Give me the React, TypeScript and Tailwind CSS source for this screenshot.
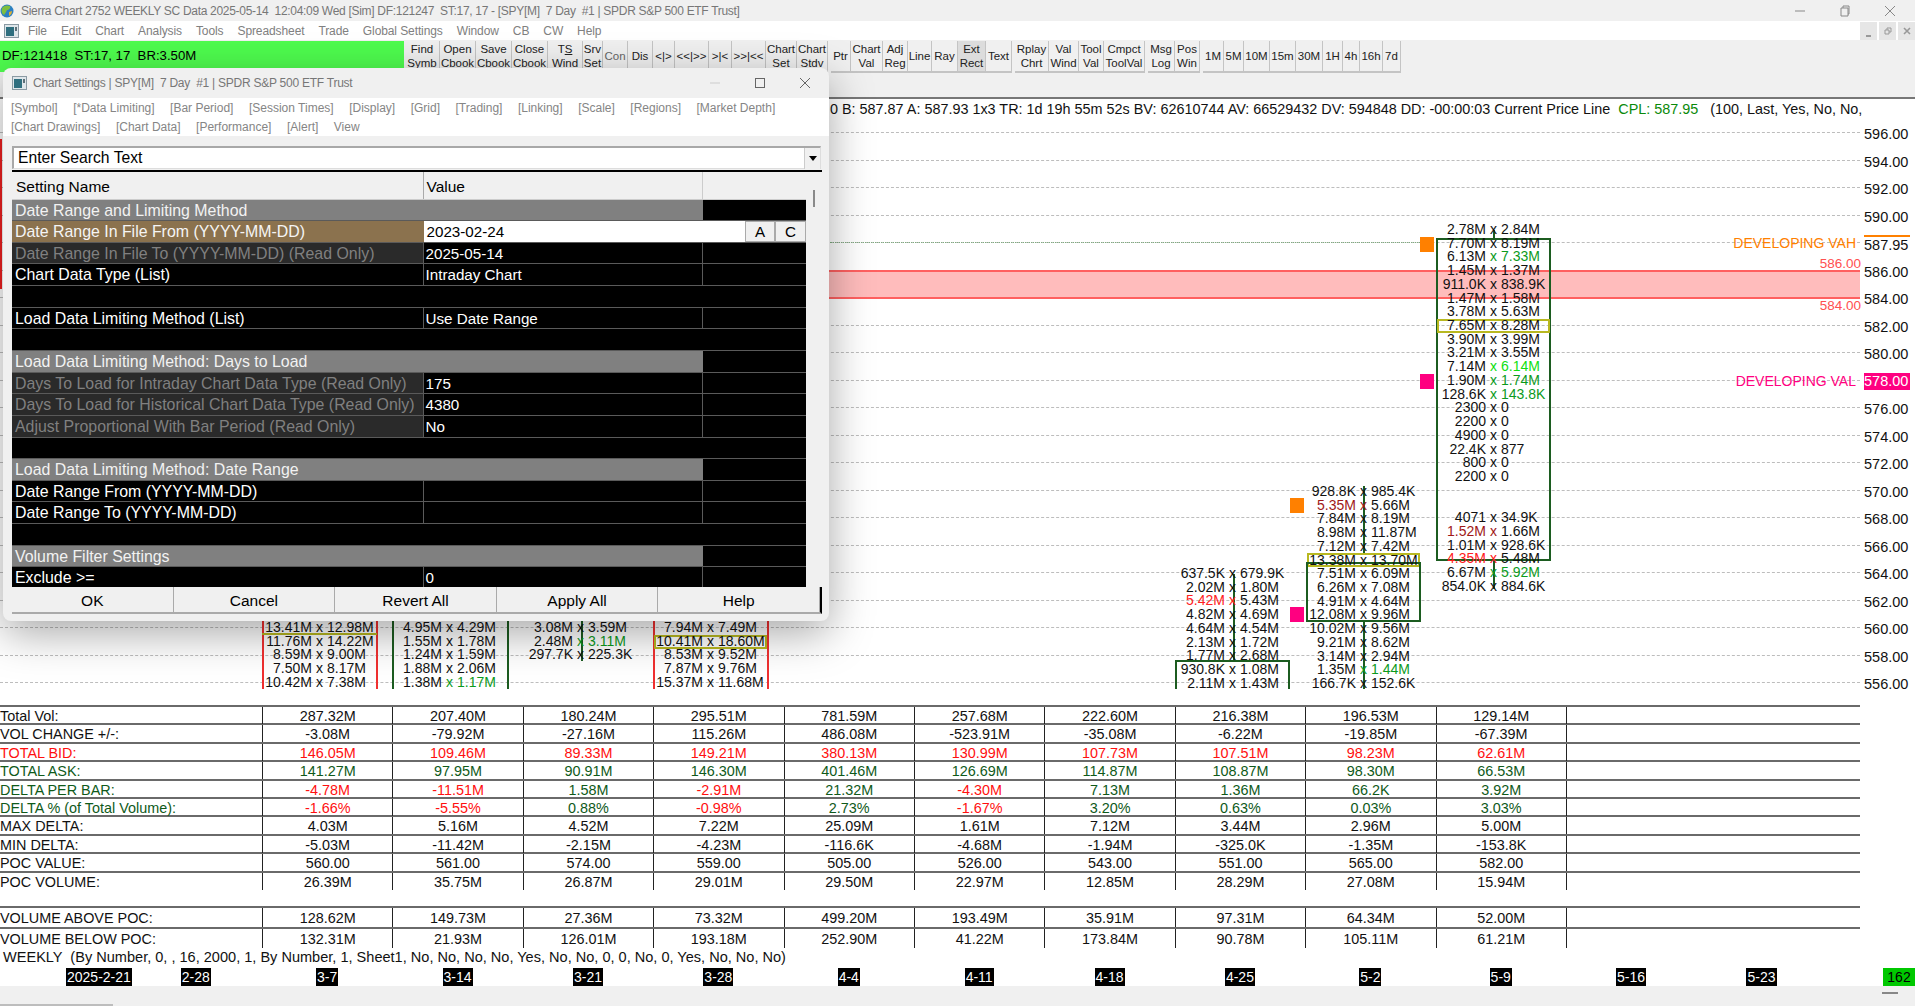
import React from "react";

const FONT = "font-['Liberation_Sans',Arial,sans-serif]";
const yOf = (p: number) => 133 + (596 - p) * 13.75 - 98;

type Tb = { t: string; w: string; c?: string };
const groups: Tb[][] = [
  [
    { t: "Find\nSymb", w: "w-[35px]" },
    { t: "Open\nCbook", w: "w-[36px]" },
    { t: "Save\nCbook", w: "w-[36px]" },
    { t: "Close\nCbook", w: "w-[36px]" },
    { t: "TS\nWind", w: "w-[35px]" },
    { t: "Srv\nSet", w: "w-[20px]" },
    { t: "Con", w: "w-[25px]", c: "text-[#666]" },
    { t: "Dis", w: "w-[25px]" },
    { t: "<|>", w: "w-[22px]" },
    { t: "<<|>>", w: "w-[34px]" },
    { t: ">|<", w: "w-[23px]" },
    { t: ">>|<<", w: "w-[34px]" },
    { t: "Chart\nSet", w: "w-[31px]" },
    { t: "Chart\nStdv", w: "w-[31px]" },
  ],
  [
    { t: "Ptr", w: "w-[20px]" },
    { t: "Chart\nVal", w: "w-[32px]" },
    { t: "Adj\nReg", w: "w-[25px]" },
    { t: "Line", w: "w-[24px]" },
    { t: "Ray", w: "w-[26px]" },
    { t: "Ext\nRect", w: "w-[28px]", c: "bg-[#dcdcdc]" },
    { t: "Text", w: "w-[26px]" },
  ],
  [
    { t: "Rplay\nChrt", w: "w-[34px]" },
    { t: "Val\nWind", w: "w-[30px]" },
    { t: "Tool\nVal", w: "w-[25px]" },
    { t: "Cmpct\nToolVal", w: "w-[41px]" },
  ],
  [
    { t: "Msg\nLog", w: "w-[27px]" },
    { t: "Pos\nWin", w: "w-[25px]" },
  ],
  [
    { t: "1M", w: "w-[21px]" },
    { t: "5M", w: "w-[20px]" },
    { t: "10M", w: "w-[26px]" },
    { t: "15m", w: "w-[26px]" },
    { t: "30M", w: "w-[27px]" },
    { t: "1H", w: "w-[20px]" },
    { t: "4h", w: "w-[17px]" },
    { t: "16h", w: "w-[23px]" },
    { t: "7d", w: "w-[18px]" },
  ],
];

const menu = ["File", "Edit", "Chart", "Analysis", "Tools", "Spreadsheet", "Trade", "Global Settings", "Window", "CB", "CW", "Help"];

function AppIcon({ className }: { className: string }) {
  return (
    <svg viewBox="0 0 15 14" className={className}>
      <rect x="0.5" y="0.5" width="14" height="13" fill="#dfe6ea" stroke="#8a9aa3" />
      <rect x="2" y="3" width="8" height="9" fill="#2f6f7f" />
      <rect x="11" y="3" width="2" height="4" fill="#5b6f78" />
    </svg>
  );
}

function Chrome() {
  return (
    <>
      <div className="h-[21px] bg-[#f0f0f0] flex items-center relative text-[12px] tracking-[-0.3px] text-[#777]">
        <svg viewBox="0 0 14 14" className="w-[14px] h-[14px] ml-[0px]">
          <circle cx="7" cy="7" r="6.5" fill="#2b7fc4" />
          <path d="M2 4c2-3 6-3 8-2 1 2-1 4-3 4-1 2-2 4-3 5-2-1-3-4-2-7z" fill="#7fbf3f" />
          <path d="M9 8l3-1c0 2-1 4-3 5z" fill="#e0b030" />
        </svg>
        <span className="ml-[7px] whitespace-pre">Sierra Chart 2752 WEEKLY SC Data 2025-05-14  12:04:09 Wed [Sim] DF:121247  ST:17, 17 - [SPY[M]  7 Day  #1 | SPDR S&amp;P 500 ETF Trust]</span>
        <div className="ml-auto flex items-center gap-[29px] pr-[17px]">
          <svg viewBox="0 0 16 16" className="w-[16px] h-[16px]"><path d="M3 8h10" stroke="#888" fill="none" /></svg>
          <svg viewBox="0 0 16 16" className="w-[16px] h-[16px]"><path d="M4 5h7v8H4zM6 5V3h6v8h-1" stroke="#888" fill="none" /></svg>
          <svg viewBox="0 0 16 16" className="w-[16px] h-[16px]"><path d="M3 3l10 10M13 3L3 13" stroke="#888" fill="none" /></svg>
        </div>
      </div>
      <div className="h-[19px] bg-white flex items-center relative text-[12px] tracking-[-0.1px] text-[#808080]">
        <AppIcon className="w-[15px] h-[14px] ml-[4px] mr-[9px]" />
        <div className="flex gap-[14px]">
          {menu.map((m) => (
            <span key={m}>{m}</span>
          ))}
        </div>
        <div className="ml-auto flex gap-[2px] h-[18px] text-[#9a9a9a] text-[10px]">
          <span className="w-[17px] bg-[#e6e6e6] flex items-end justify-center pb-[3px]"><span className="w-[5px] h-[2px] bg-[#999]" /></span>
          <span className="w-[17px] bg-[#e6e6e6] flex items-center justify-center">
            <svg viewBox="0 0 8 8" className="w-[8px] h-[8px]"><path d="M1 3h4v4H1zM3 3V1h4v4H5" stroke="#999" fill="none" /></svg>
          </span>
          <span className="w-[17px] bg-[#e6e6e6] flex items-center justify-center">
            <svg viewBox="0 0 8 8" className="w-[8px] h-[8px]"><path d="M1 1l6 6M7 1L1 7" stroke="#999" strokeWidth="1.6" fill="none" /></svg>
          </span>
        </div>
      </div>
      <div className="h-[57px] bg-[#f0f0f0] flex items-start pt-[1px]">
        <div className="w-[404px] h-[31px] bg-[#4efc4e] text-[13.2px] text-black flex items-start pt-[5px] pl-[2px] whitespace-pre shrink-0">DF:121418  ST:17, 17  BR:3.50M</div>
        <div className="flex gap-[3px] ml-[1px]">
          {groups.map((g, i) => (
            <div key={i} className="flex">
              {g.map((b) => (
                <div
                  key={b.t}
                  className={`${b.w} ${b.c ?? ""} h-[32px] border-r border-b-2 border-[#c4c4c4] flex items-center justify-center text-center text-[11.5px] leading-[14px] text-[#222] whitespace-pre`}
                >
                  {b.t === "TS\nWind" ? (
                    <span>
                      T<u>S</u>
                      {"\nWind"}
                    </span>
                  ) : (
                    b.t
                  )}
                </div>
              ))}
            </div>
          ))}
        </div>
      </div>
    </>
  );
}

type Cell = [string, string, string?, string?];
const RED = "text-[#ff2020]";
const DRED = "text-[#a01818]";
const GRN = "text-[#0c9a1c]";
const LIME = "text-[#10e010]";

function Rows({ left, top, rows }: { left: number; top: number; rows: (Cell | null)[] }) {
  return (
    <div className="absolute w-[115px] text-[14px] leading-[13.72px] text-[#111]" style={{ left, top }}>
      {rows.map((r, i) =>
        r ? (
          <div key={i} className="grid grid-cols-[1fr_auto_1fr] gap-x-[4px] h-[13.72px] whitespace-nowrap">
            <span className={`text-right ${r[2] ?? ""}`}>{r[0]}</span>
            <span className={r[3] ?? r[2] ?? ""}>x</span>
            <span className={`text-left ${r[3] ?? ""}`}>{r[1]}</span>
          </div>
        ) : (
          <div key={i} className="h-[13.72px]" />
        )
      )}
    </div>
  );
}

function Box({ l, t, w, h, c }: { l: number; t: number; w: number; h: number; c: string }) {
  return <div className={`absolute border-2 ${c}`} style={{ left: l, top: t - 98, width: w, height: h }} />;
}
function VLine({ x, t, b, c }: { x: number; t: number; b: number; c: string }) {
  return <div className={`absolute w-[2px] ${c}`} style={{ left: x, top: t - 98, height: b - t }} />;
}
function Sq({ x, y, c }: { x: number; y: number; c: string }) {
  return <div className={`absolute w-[14px] h-[15px] ${c}`} style={{ left: x, top: y - 98 }} />;
}

const GREEN_B = "bg-[#1c5c20]";
const prices = [596, 594, 592, 590, 586, 584, 582, 580, 576, 574, 572, 570, 568, 566, 564, 562, 560, 558, 556];

function Chart() {
  return (
    <div className="relative h-[608px] bg-white border-t-2 border-[#777] overflow-hidden text-[14px] text-[#111]">
      {[...prices, 578, 588].map((p) => (
        <div key={p} className="absolute left-0 w-[1860px] border-t border-dashed border-[#bdbdbd]" style={{ top: yOf(p) - 2 }} />
      ))}
      <div className="absolute left-[830px] w-[590px] border-t border-dotted border-[#7fae7f]" style={{ top: 143 }} />
      <div className="absolute left-0 top-[40px] w-[2px] h-[150px] bg-[#f02020]" />

      {/* band */}
      <div className="absolute left-[700px] w-[1160px] bg-[#ffbcbc] border-y-2 border-[#ff6060]" style={{ top: yOf(586) - 2, height: 29 }} />

      {/* header text */}
      <div className="absolute left-[830px] top-[2px] whitespace-pre leading-[16px] text-[14.4px]">
        0 B: 587.87 A: 587.93 1x3 TR: 1d 19h 55m 52s BV: 62610744 AV: 66529432 DV: 594848 DD: -00:00:03 Current Price Line  <span className="text-[#0a8a0a]">CPL: 587.95</span>   (100, Last, Yes, No, No,
      </div>

      {/* bars under dialog */}
      <VLine x={262} t={610} b={688} c="bg-[#f03030]" />
      <VLine x={376} t={610} b={688} c="bg-[#f03030]" />
      <div className="absolute left-[262px] w-[115px] h-[2px] bg-[#b8b820]" style={{ top: 632 - 98 }} />
      <Rows left={262} top={620 - 98} rows={[["13.41M", "12.98M"], ["11.76M", "14.22M"], ["8.59M", "9.00M"], ["7.50M", "8.17M"], ["10.42M", "7.38M"]]} />

      <VLine x={392} t={610} b={688} c={GREEN_B} />
      <VLine x={507} t={610} b={688} c={GREEN_B} />
      <Rows left={392} top={620 - 98} rows={[["4.95M", "4.29M"], ["1.55M", "1.78M"], ["1.24M", "1.59M"], ["1.88M", "2.06M"], ["1.38M", "1.17M", "", GRN]]} />

      <VLine x={581} t={610} b={660} c={GREEN_B} />
      <Rows left={523} top={620 - 98} rows={[["3.08M", "3.59M"], ["2.48M", "3.11M", "", GRN], ["297.7K", "225.3K"]]} />

      <VLine x={653} t={610} b={688} c="bg-[#f03030]" />
      <VLine x={767} t={610} b={688} c="bg-[#f03030]" />
      <Box l={654} t={634} w={113} h={14} c="border-[#b8b820]" />
      <Rows left={653} top={620 - 98} rows={[["7.94M", "7.49M"], ["10.41M", "18.60M"], ["8.53M", "9.52M"], ["7.87M", "9.76M"], ["15.37M", "11.68M"]]} />

      {/* bar 1175 */}
      <VLine x={1233} t={573} b={660} c={GREEN_B} />
      <div className={`absolute left-[1175px] w-[115px] border-2 border-b-0 border-[#1c5c20]`} style={{ top: 659 - 98, height: 29 }} />
      <Rows
        left={1175}
        top={566 - 98}
        rows={[["637.5K", "679.9K"], ["2.02M", "1.80M"], ["5.42M", "5.43M", RED], ["4.82M", "4.69M"], ["4.64M", "4.54M"], ["2.13M", "1.72M"], ["1.77M", "2.68M"], ["930.8K", "1.08M"], ["2.11M", "1.43M"]]}
      />

      {/* bar 1306 */}
      <VLine x={1363} t={485} b={552} c={GREEN_B} />
      <VLine x={1363} t={620} b={688} c={GREEN_B} />
      <Box l={1307} t={552} w={113} h={14} c="border-[#b8b820]" />
      <Box l={1306} t={561} w={115} h={60} c="border-[#1c5c20]" />
      <Rows
        left={1306}
        top={484 - 98}
        rows={[
          ["928.8K", "985.4K"],
          ["5.35M", "5.66M", DRED],
          ["7.84M", "8.19M"],
          ["8.98M", "11.87M"],
          ["7.12M", "7.42M"],
          ["13.38M", "13.70M"],
          ["7.51M", "6.09M"],
          ["6.26M", "7.08M"],
          ["4.91M", "4.64M"],
          ["12.08M", "9.96M"],
          ["10.02M", "9.56M"],
          ["9.21M", "8.62M"],
          ["3.14M", "2.94M"],
          ["1.35M", "1.44M", "", GRN],
          ["166.7K", "152.6K"],
        ]}
      />
      <Sq x={1290} y={497} c="bg-[#ff8000]" />
      <Sq x={1290} y={606} c="bg-[#ff0080]" />

      {/* bar 1436 */}
      <VLine x={1493} t={229} b={238} c={GREEN_B} />
      <VLine x={1493} t={559} b={588} c={GREEN_B} />
      <Box l={1436} t={237} w={115} h={323} c="border-[#1c5c20]" />
      <Box l={1437} t={318} w={113} h={14} c="border-[#b8b820]" />
      <Rows
        left={1436}
        top={222 - 98}
        rows={[
          ["2.78M", "2.84M"],
          ["7.70M", "8.19M"],
          ["6.13M", "7.33M", "", GRN],
          ["1.45M", "1.37M"],
          ["911.0K", "838.9K"],
          ["1.47M", "1.58M"],
          ["3.78M", "5.63M"],
          ["7.65M", "8.28M"],
          ["3.90M", "3.99M"],
          ["3.21M", "3.55M"],
          ["7.14M", "6.14M", "", LIME],
          ["1.90M", "1.74M", "", GRN],
          ["128.6K", "143.8K", "", GRN],
          ["2300", "0"],
          ["2200", "0"],
          ["4900", "0"],
          ["22.4K", "877"],
          ["800", "0"],
          ["2200", "0"],
          null,
          null,
          ["4071", "34.9K"],
          ["1.52M", "1.66M", DRED],
          ["1.01M", "928.6K"],
          ["4.35M", "5.48M", RED],
          ["6.67M", "5.92M", "", GRN],
          ["854.0K", "884.6K"],
        ]}
      />
      <Sq x={1420} y={236} c="bg-[#ff8000]" />
      <Sq x={1420} y={373} c="bg-[#ff0080]" />

      {/* price scale */}
      <div className="absolute left-0 top-0 w-full">
        {prices.map((p) => (
          <div key={p} className="absolute left-[1864px] text-[14.5px] leading-[16px]" style={{ top: yOf(p) - 8 }}>
            {p.toFixed(2)}
          </div>
        ))}
      </div>
      <div className="absolute left-[1864px] w-[46px] h-[2px] bg-[#ff8000]" style={{ top: 234 - 98 }} />
      <div className="absolute left-[1864px] text-[14.5px] leading-[16px]" style={{ top: 236 - 98 }}>587.95</div>
      <div className="absolute left-[1864px] w-[46px] h-[17px] bg-[#ff0080] text-white text-[14.5px] leading-[17px]" style={{ top: 372 - 98 }}>578.00</div>
      <div className="absolute right-[59px] text-[#ff8000] text-[14px] leading-[16px]" style={{ top: 234 - 98 }}>DEVELOPING VAH</div>
      <div className="absolute right-[59px] text-[#ff0080] text-[14px] leading-[16px]" style={{ top: 372 - 98 }}>DEVELOPING VAL</div>
      <div className="absolute right-[54px] text-[#ff5050] text-[13.5px] leading-[16px]" style={{ top: 255 - 98 }}>586.00</div>
      <div className="absolute right-[54px] text-[#ff5050] text-[13.5px] leading-[16px]" style={{ top: 297 - 98 }}>584.00</div>
    </div>
  );
}

const G = "text-[#0f5a1a]";
const R = "text-[#ff1010]";
type TRow = { label: string; lc?: string; vc?: string; v: string[]; auto?: boolean };
const t1: TRow[] = [
  { label: "Total Vol:", v: "287.32M 207.40M 180.24M 295.51M 781.59M 257.68M 222.60M 216.38M 196.53M 129.14M".split(" ") },
  { label: "VOL CHANGE +/-:", v: "-3.08M -79.92M -27.16M 115.26M 486.08M -523.91M -35.08M -6.22M -19.85M -67.39M".split(" ") },
  { label: "TOTAL BID:", lc: R, vc: R, v: "146.05M 109.46M 89.33M 149.21M 380.13M 130.99M 107.73M 107.51M 98.23M 62.61M".split(" ") },
  { label: "TOTAL ASK:", lc: G, vc: G, v: "141.27M 97.95M 90.91M 146.30M 401.46M 126.69M 114.87M 108.87M 98.30M 66.53M".split(" ") },
  { label: "DELTA PER BAR:", lc: G, auto: true, v: "-4.78M -11.51M 1.58M -2.91M 21.32M -4.30M 7.13M 1.36M 66.2K 3.92M".split(" ") },
  { label: "DELTA % (of Total Volume):", lc: G, auto: true, v: "-1.66% -5.55% 0.88% -0.98% 2.73% -1.67% 3.20% 0.63% 0.03% 3.03%".split(" ") },
  { label: "MAX DELTA:", v: "4.03M 5.16M 4.52M 7.22M 25.09M 1.61M 7.12M 3.44M 2.96M 5.00M".split(" ") },
  { label: "MIN DELTA:", v: "-5.03M -11.42M -2.15M -4.23M -116.6K -4.68M -1.94M -325.0K -1.35M -153.8K".split(" ") },
  { label: "POC VALUE:", v: "560.00 561.00 574.00 559.00 505.00 526.00 543.00 551.00 565.00 582.00".split(" ") },
  { label: "POC VOLUME:", v: "26.39M 35.75M 26.87M 29.01M 29.50M 22.97M 12.85M 28.29M 27.08M 15.94M".split(" ") },
];
const t2: TRow[] = [
  { label: "VOLUME ABOVE POC:", v: "128.62M 149.73M 27.36M 73.32M 499.20M 193.49M 35.91M 97.31M 64.34M 52.00M".split(" ") },
  { label: "VOLUME BELOW POC:", v: "132.31M 21.93M 126.01M 193.18M 252.90M 41.22M 173.84M 90.78M 105.11M 61.21M".split(" ") },
];

function StatRow({ r, h }: { r: TRow; h: string }) {
  return (
    <div className={`${h} grid grid-cols-[262px_repeat(10,130.4px)_1fr] w-[1860px] border-t-2 border-[#6a6a6a] text-[14.4px] leading-[16px] text-[#111] box-border`}>
      <div className={`whitespace-nowrap flex items-center pt-[1px] ${r.lc ?? ""}`}>{r.label}</div>
      {r.v.map((x, i) => (
        <div
          key={i}
          className={`border-l border-[#222] flex items-center justify-center pt-[1px] ${r.vc ?? ""} ${r.auto ? (x.startsWith("-") ? R : G) : ""}`}
        >
          {x}
        </div>
      ))}
      <div className="border-l border-[#222]" />
    </div>
  );
}

const ticks = ["3-7", "3-14", "3-21", "3-28", "4-4", "4-11", "4-18", "4-25", "5-2", "5-9", "5-16", "5-23"];

function Bottom() {
  return (
    <div className="bg-white">
      {t1.map((r) => (
        <StatRow key={r.label} r={r} h="h-[18.4px]" />
      ))}
      <div className="h-[17px]" />
      {t2.map((r) => (
        <StatRow key={r.label} r={r} h="h-[21px]" />
      ))}
      <div className="h-[19px] pl-[3px] text-[14.55px] leading-[18px] whitespace-pre text-[#111]">WEEKLY  (By Number, 0, , 16, 2000, 1, By Number, 1, Sheet1, No, No, No, No, Yes, No, No, 0, 0, No, 0, Yes, No, No, No)</div>
      <div className="h-[19px] grid grid-cols-[262px_repeat(12,130.4px)_1fr] text-[14px] leading-[18px] text-white pt-[1px]">
        <div className="flex pl-[66px] gap-[49px]">
          <span className="bg-black px-[1px]">2025-2-21</span>
          <span className="bg-black px-[1px]">2-28</span>
        </div>
        {ticks.map((t) => (
          <div key={t} className="flex justify-center">
            <span className="bg-black px-[1px]">{t}</span>
          </div>
        ))}
        <div className="flex justify-end">
          <span className="bg-[#00c800] text-black w-[32px] text-center">162</span>
        </div>
      </div>
      <div className="h-[20px] bg-[#f0f0f0] relative">
        <div className="absolute right-[17px] top-[6px] w-[16px] h-[2px] bg-[#888]" />
        <div className="absolute left-0 bottom-0 w-[113px] h-[2px] bg-[#bdbdbd]" />
      </div>
    </div>
  );
}

type DRow = { n?: string; v?: string; k?: "sec" | "ro" | "active" };
const drows: DRow[] = [
  { n: "Date Range and Limiting Method", k: "sec" },
  { n: "Date Range In File From (YYYY-MM-DD)", v: "2023-02-24", k: "active" },
  { n: "Date Range In File To (YYYY-MM-DD) (Read Only)", v: "2025-05-14", k: "ro" },
  { n: "Chart Data Type (List)", v: "Intraday Chart" },
  {},
  { n: "Load Data Limiting Method (List)", v: "Use Date Range" },
  {},
  { n: "Load Data Limiting Method: Days to Load", k: "sec" },
  { n: "Days To Load for Intraday Chart Data Type (Read Only)", v: "175", k: "ro" },
  { n: "Days To Load for Historical Chart Data Type (Read Only)", v: "4380", k: "ro" },
  { n: "Adjust Proportional With Bar Period (Read Only)", v: "No", k: "ro" },
  {},
  { n: "Load Data Limiting Method: Date Range", k: "sec" },
  { n: "Date Range From (YYYY-MM-DD)", v: "" },
  { n: "Date Range To (YYYY-MM-DD)", v: "" },
  {},
  { n: "Volume Filter Settings", k: "sec" },
  { n: "Exclude >=", v: "0" },
];

function DialogRow({ r }: { r: DRow }) {
  const base = "h-[21.65px] flex border-b border-[#5a5a5a] text-[15.2px] leading-[22px] whitespace-nowrap box-border";
  if (r.k === "sec") {
    return (
      <div className={base}>
        <div className="w-[691px] bg-[#808080] text-[#f2f2f2] pl-[3px] text-[15.9px]">{r.n}</div>
        <div className="flex-1 bg-black" />
      </div>
    );
  }
  if (r.k === "active") {
    return (
      <div className={base}>
        <div className="w-[411.5px] bg-[#8b724e] text-[#f5f5f5] pl-[3px] text-[15.9px]">{r.n}</div>
        <div className="w-[321.5px] bg-white text-black pl-[3px]">{r.v}</div>
        <div className="w-[30px] bg-[#f0f0f0] text-black text-center border border-[#aaa] leading-[20px]">A</div>
        <div className="w-[31px] bg-[#f0f0f0] text-black text-center border border-[#aaa] leading-[20px]">C</div>
      </div>
    );
  }
  if (r.n === undefined) {
    return <div className={`${base} bg-black`} />;
  }
  return (
    <div className={`${base} bg-black text-white`}>
      <div className={`w-[411.5px] pl-[3px] border-r border-[#5a5a5a] text-[15.9px] ${r.k === "ro" ? "bg-[#2a2a2a] text-[#808080]" : ""}`}>{r.n}</div>
      <div className="w-[279.5px] pl-[2px] border-r border-[#5a5a5a]">{r.v}</div>
      <div className="flex-1" />
    </div>
  );
}

function Dialog() {
  const tabs1 = ["[Symbol]", "[*Data Limiting]", "[Bar Period]", "[Session Times]", "[Display]", "[Grid]", "[Trading]", "[Linking]", "[Scale]", "[Regions]", "[Market Depth]"];
  const tabs2 = ["[Chart Drawings]", "[Chart Data]", "[Performance]", "[Alert]", "View"];
  return (
    <div className="absolute left-[3px] top-[68px] w-[826px] h-[553px] rounded-lg overflow-hidden bg-[#f0f0f0] shadow-[0_12px_44px_rgba(0,0,0,0.35)] flex flex-col">
      <div className="h-[30px] flex items-center text-[12px] tracking-[-0.25px] text-[#777] shrink-0">
        <AppIcon className="w-[15px] h-[14px] ml-[9px] mr-[6px]" />
        <span className="whitespace-pre">Chart Settings | SPY[M]  7 Day  #1 | SPDR S&amp;P 500 ETF Trust</span>
        <div className="ml-auto flex items-center gap-[31px] pr-[17px]">
          <svg viewBox="0 0 14 14" className="w-[14px] h-[14px]"><path d="M2 7h10" stroke="#ccc" fill="none" /></svg>
          <svg viewBox="0 0 14 14" className="w-[14px] h-[14px]"><rect x="2.5" y="2.5" width="9" height="9" stroke="#666" fill="none" /></svg>
          <svg viewBox="0 0 14 14" className="w-[14px] h-[14px]"><path d="M2 2l10 10M12 2L2 12" stroke="#666" fill="none" /></svg>
        </div>
      </div>
      <div className="h-[38px] bg-white pl-[8px] pt-[1px] text-[12px] leading-[19px] text-[#858585] shrink-0">
        <div className="flex gap-[15.5px]">{tabs1.map((t) => <span key={t}>{t}</span>)}</div>
        <div className="flex gap-[15.5px]">{tabs2.map((t) => <span key={t}>{t}</span>)}</div>
      </div>
      <div className="flex-1 pl-[9px] pr-[7px] pt-[10px]">
        <div className="h-[23px] mr-[1px] bg-white border border-t-2 border-l-2 border-[#a8a8a8] border-r-[#ddd] border-b-[#ddd] flex items-center text-[15.7px] text-black pl-[4px]">
          Enter Search Text
          <span className="ml-auto w-[16px] h-[21px] bg-[#f0f0f0] flex items-center justify-center border-l border-[#ccc]">
            <span className="w-0 h-0 border-x-[4px] border-x-transparent border-t-[5px] border-t-black" />
          </span>
        </div>
        <div className="mt-[1px] h-[2px] bg-black" />
        <div className="flex h-[415px]">
          <div className="w-[794px]">
            <div className="h-[27.5px] flex text-[15.5px] leading-[29px] text-black border-b border-[#ccc]">
              <div className="w-[411.5px] pl-[4px] border-r border-[#aaa]">Setting Name</div>
              <div className="w-[279.5px] pl-[3px] border-r border-[#ccc]">Value</div>
            </div>
            <div className="h-[387.5px] overflow-hidden bg-black">
              {drows.map((r, i) => <DialogRow key={i} r={r} />)}
            </div>
          </div>
          <div className="flex-1 flex justify-center">
            <div className="w-[2px] h-[17px] mt-[18px] bg-[#8a8a8a]" />
          </div>
        </div>
        <div className="h-[27px] flex text-[15.5px] text-black border-r-2 border-black border-b-2 border-b-[#aaa]">
          {["OK", "Cancel", "Revert All", "Apply All", "Help"].map((b) => (
            <div key={b} className="flex-1 flex items-center justify-center pt-[2px] border-r border-[#aaa] bg-[#f0f0f0]">{b}</div>
          ))}
        </div>
      </div>
    </div>
  );
}

export default function App() {
  return (
    <div className={`${FONT} relative w-[1915px] h-[1006px] overflow-hidden bg-white`}>
      <Chrome />
      <Chart />
      <Bottom />
      <Dialog />
    </div>
  );
}
